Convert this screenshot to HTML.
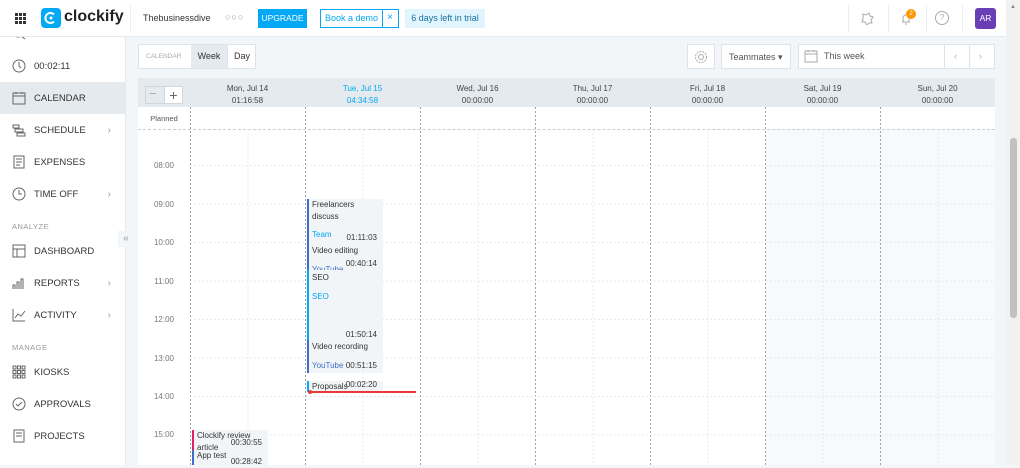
<!DOCTYPE html>
<html><head><meta charset="utf-8"><style>
*{box-sizing:border-box;margin:0;padding:0}
body{width:1020px;height:465px;overflow:hidden;font-family:"Liberation Sans",sans-serif;background:#f2f6f8;position:relative;color:#333}
.abs{position:absolute}
.top{left:0;top:0;width:1006px;height:37px;background:#fff;border-bottom:1px solid #e4eaee}
.side{left:0;top:37px;width:126px;height:428px;background:#fff;border-right:1px solid #e4eaee;overflow:hidden}
.si{position:absolute;left:0;width:125px;height:32px;font-size:9.5px;color:#333;display:flex;align-items:center;padding-left:34px}
.si svg{position:absolute;left:12px;top:9px}
.lbl{position:absolute;left:12px;font-size:7.5px;color:#999;letter-spacing:.5px}
.chev{position:absolute;right:14px;color:#999;font-size:10px}
.hd{font-size:8px;color:#444;text-align:center;line-height:12px}
.hr{position:absolute;left:138px;width:52px;text-align:center;font-size:8px;color:#777}
.ev{position:absolute;background:#f2f5f8;font-size:8px;color:#333;line-height:11.5px;padding-left:5px}
.ev .b{position:absolute;left:0;top:0;bottom:0;width:2px}
.ev .t{position:absolute;right:6px;font-size:8px}
</style></head><body>
<div class="abs top"></div>
<svg class="abs" style="left:15px;top:13px" width="11" height="11"><g fill="#333"><rect x="0" y="0" width="3" height="3"/><rect x="4" y="0" width="3" height="3"/><rect x="8" y="0" width="3" height="3"/><rect x="0" y="4" width="3" height="3"/><rect x="4" y="4" width="3" height="3"/><rect x="8" y="4" width="3" height="3"/><rect x="0" y="8" width="3" height="3"/><rect x="4" y="8" width="3" height="3"/><rect x="8" y="8" width="3" height="3"/></g></svg>
<div class="abs" style="left:41px;top:8px;width:20px;height:20px;background:#03a9f4;border-radius:4px"></div>
<svg class="abs" style="left:44px;top:11px" width="14" height="14"><path d="M10 3.5A5 5 0 1 0 10 10.5" stroke="#fff" stroke-width="2" fill="none"/><circle cx="7" cy="7" r="1.5" fill="#fff"/></svg>
<div class="abs" style="left:64px;top:8px;font-size:16px;font-weight:bold;color:#222">clockify</div>
<div class="abs" style="left:130px;top:5px;width:1px;height:28px;background:#eee"></div>
<div class="abs" style="left:143px;top:13px;font-size:9px;color:#333">Thebusinessdive</div>
<div class="abs" style="left:225px;top:12px;font-size:9px;color:#999;letter-spacing:1px">○○○</div>
<div class="abs" style="left:258px;top:9px;width:49px;height:19px;background:#03a9f4;color:#fff;font-size:8.5px;text-align:center;line-height:19px">UPGRADE</div>
<div class="abs" style="left:320px;top:9px;width:79px;height:19px;border:1px solid #03a9f4;background:#fff"></div>
<div class="abs" style="left:382px;top:9px;width:1px;height:19px;background:#03a9f4"></div>
<div class="abs" style="left:325px;top:13px;font-size:9px;color:#03a9f4">Book a demo</div>
<div class="abs" style="left:387px;top:12px;font-size:10px;color:#03a9f4">×</div>
<div class="abs" style="left:405px;top:9px;width:80px;height:19px;background:#e1f5fe;font-size:9px;color:#1a6fa0;text-align:center;line-height:19px">6 days left in trial</div>
<div class="abs" style="left:848px;top:5px;width:1px;height:27px;background:#eee"></div>
<div class="abs" style="left:888px;top:5px;width:1px;height:27px;background:#eee"></div>
<div class="abs" style="left:926px;top:5px;width:1px;height:27px;background:#eee"></div>
<div class="abs" style="left:962px;top:5px;width:1px;height:27px;background:#eee"></div>
<svg class="abs" style="left:860px;top:11px" width="14" height="14"><path d="M3 3l3 1 3-2 1 3 3 1-2 3 1 3-3 0-2 2-2-3-3 0 1-3z" stroke="#aaa" fill="none"/></svg>
<svg class="abs" style="left:899px;top:11px" width="14" height="14"><path d="M3 11h8M4 11V7a3 3 0 0 1 6 0v4M6 13h2" stroke="#aaa" fill="none"/></svg>
<div class="abs" style="left:906px;top:9px;width:10px;height:10px;border-radius:5px;background:#ff9800;color:#fff;font-size:6.5px;text-align:center;line-height:10px">2</div>
<div class="abs" style="left:935px;top:11px;width:14px;height:14px;border:1px solid #aaa;border-radius:7px;font-size:8px;color:#aaa;text-align:center;line-height:12px">?</div>
<div class="abs" style="left:975px;top:8px;width:21px;height:21px;background:#6a3fb5;border-radius:3px;color:#fff;font-size:8.5px;text-align:center;line-height:21px">AR</div>
<div class="abs" style="left:1006px;top:0;width:14px;height:465px;background:#f1f1f1"></div>
<div class="abs" style="left:1010px;top:138px;width:7px;height:180px;background:#c1c1c1;border-radius:3px"></div>
<div class="abs" style="left:1010px;top:4px;font-size:6px;color:#888">▲</div>

<div class="abs side">
<svg style="position:absolute;left:12px;top:-6px" width="14" height="10"><circle cx="6" cy="2" r="4" stroke="#666" fill="none"/><path d="M9 5l4 3" stroke="#666"/></svg>
<div class="si" style="top:13px">00:02:11<svg width="14" height="14"><circle cx="7" cy="7" r="6" stroke="#666" fill="none"/><path d="M7 3v4l2 2" stroke="#666" fill="none"/></svg></div>
<div class="si" style="top:45px;background:#e4eaee">CALENDAR<svg width="14" height="14"><rect x="1" y="2" width="12" height="11" stroke="#666" fill="none"/><path d="M1 5h12M4 1v2M10 1v2" stroke="#666"/></svg></div>
<div class="si" style="top:77px">SCHEDULE<svg width="14" height="14"><path d="M1 2h6v3H1zM3 6h8v3H3zM5 10h8v3H5z" stroke="#666" fill="none"/></svg><span class="chev">›</span></div>
<div class="si" style="top:109px">EXPENSES<svg width="14" height="14"><path d="M2 1h10v12H2zM4 4h6M4 7h6M4 10h4" stroke="#666" fill="none"/></svg></div>
<div class="si" style="top:141px">TIME OFF<svg width="14" height="14"><circle cx="7" cy="7" r="6" stroke="#666" fill="none"/><path d="M7 3v4h3" stroke="#666" fill="none"/></svg><span class="chev">›</span></div>
<div class="lbl" style="top:185px">ANALYZE</div>
<div class="si" style="top:198px">DASHBOARD<svg width="14" height="14"><rect x="1" y="1" width="12" height="12" stroke="#666" fill="none"/><path d="M1 5h12M5 5v8" stroke="#666"/></svg></div>
<div class="si" style="top:230px">REPORTS<svg width="14" height="14"><path d="M1 13V9h2v4M5 13V6h2v7M9 13V3h2v10" stroke="#666" fill="none"/></svg><span class="chev">›</span></div>
<div class="si" style="top:262px">ACTIVITY<svg width="14" height="14"><path d="M1 1v12h12M3 10l3-4 3 2 4-5" stroke="#666" fill="none"/></svg><span class="chev">›</span></div>
<div class="lbl" style="top:306px">MANAGE</div>
<div class="si" style="top:319px">KIOSKS<svg width="14" height="14"><path d="M1 1h3v3H1zM5.5 1h3v3h-3zM10 1h3v3h-3zM1 5.5h3v3H1zM5.5 5.5h3v3h-3zM10 5.5h3v3h-3zM1 10h3v3H1zM5.5 10h3v3h-3zM10 10h3v3h-3z" stroke="#666" fill="none"/></svg></div>
<div class="si" style="top:351px">APPROVALS<svg width="14" height="14"><circle cx="7" cy="7" r="6" stroke="#666" fill="none"/><path d="M4 7l2 2 4-4" stroke="#666" fill="none"/></svg></div>
<div class="si" style="top:383px">PROJECTS<svg width="14" height="14"><path d="M2 1h10v12H2zM4 4h6M4 7h6" stroke="#666" fill="none"/></svg></div>
</div>
<div class="abs" style="left:118px;top:231px;width:16px;height:16px;background:#f2f6f8;color:#999;font-size:10px;text-align:center;line-height:15px">«</div>

<div class="abs" style="left:138px;top:44px;width:118px;height:25px;background:#fff;border:1px solid #dde3e8"></div>
<div class="abs" style="left:146px;top:53px;font-size:6.5px;color:#aaa">CALENDAR</div>
<div class="abs" style="left:191px;top:45px;width:36px;height:23px;background:#e4eaee;font-size:9px;text-align:center;line-height:23px">Week</div>
<div class="abs" style="left:227px;top:45px;width:1px;height:23px;background:#dde3e8"></div>
<div class="abs" style="left:234px;top:51px;font-size:9px">Day</div>
<div class="abs" style="left:687px;top:44px;width:28px;height:25px;background:#fff;border:1px solid #dde3e8"></div>
<svg class="abs" style="left:694px;top:50px" width="14" height="14"><circle cx="7" cy="7" r="5.5" stroke="#aaa" fill="none" stroke-dasharray="2 1"/><circle cx="7" cy="7" r="2.5" stroke="#aaa" fill="none"/></svg>
<div class="abs" style="left:721px;top:44px;width:70px;height:25px;background:#fff;border:1px solid #dde3e8;font-size:9px;color:#555;padding:7px 0 0 7px">Teammates ▾</div>
<div class="abs" style="left:798px;top:44px;width:197px;height:25px;background:#fff;border:1px solid #dde3e8"></div>
<svg class="abs" style="left:804px;top:49px" width="14" height="14"><rect x="1" y="2" width="12" height="11" stroke="#aaa" fill="none"/><path d="M1 5h12M4 1v2M10 1v2" stroke="#aaa"/></svg>
<div class="abs" style="left:824px;top:51px;font-size:9px;color:#555">This week</div>
<div class="abs" style="left:944px;top:45px;width:1px;height:23px;background:#dde3e8"></div>
<div class="abs" style="left:969px;top:45px;width:1px;height:23px;background:#dde3e8"></div>
<div class="abs" style="left:954px;top:51px;font-size:9px;color:#aaa">‹</div>
<div class="abs" style="left:979px;top:51px;font-size:9px;color:#aaa">›</div>

<div class="abs" style="left:138px;top:78px;width:857px;height:29px;background:#e4eaee"></div>
<div class="abs" style="left:145px;top:86px;width:38px;height:18px;background:#e4eaee;border:1px solid #cfd6dc"></div>
<div class="abs" style="left:164px;top:86px;width:19px;height:18px;background:#fff;border:1px solid #cfd6dc;font-size:14px;color:#666;text-align:center;line-height:16px">+</div>
<div class="abs" style="left:149px;top:86px;font-size:13px;color:#aaa">−</div>
<div class="abs" style="left:138px;top:107px;width:857px;height:358px;background:#fff"></div>
<div class="abs" style="left:765px;top:129px;width:230px;height:336px;background:#f7f9fb"></div>
<div class="abs" style="left:138px;top:129px;width:857px;border-top:1px dashed #c6ced6"></div>
<div class="abs" style="left:138px;top:114px;width:52px;text-align:center;font-size:7.5px;color:#555">Planned</div>
<div class="abs hd" style="left:190px;top:83px;width:115px">Mon, Jul 14<br>01:16:58</div>
<div class="abs hd" style="left:305px;top:83px;width:115px;color:#03a9f4">Tue, Jul 15<br>04:34:58</div>
<div class="abs hd" style="left:420px;top:83px;width:115px">Wed, Jul 16<br>00:00:00</div>
<div class="abs hd" style="left:535px;top:83px;width:115px">Thu, Jul 17<br>00:00:00</div>
<div class="abs hd" style="left:650px;top:83px;width:115px">Fri, Jul 18<br>00:00:00</div>
<div class="abs hd" style="left:765px;top:83px;width:115px">Sat, Jul 19<br>00:00:00</div>
<div class="abs hd" style="left:880px;top:83px;width:115px">Sun, Jul 20<br>00:00:00</div>
<svg class="abs" style="left:138px;top:107px" width="857" height="358">
<g stroke="#9aa4ad" stroke-dasharray="2 2"><line x1="52.5" y1="0" x2="52.5" y2="358"/><line x1="167.5" y1="0" x2="167.5" y2="358"/><line x1="282.5" y1="0" x2="282.5" y2="358"/><line x1="397.5" y1="0" x2="397.5" y2="358"/><line x1="512.5" y1="0" x2="512.5" y2="358"/><line x1="627.5" y1="0" x2="627.5" y2="358"/><line x1="742.5" y1="0" x2="742.5" y2="358"/></g>
<g stroke="#e6eaee" stroke-dasharray="2 2"><line x1="110" y1="22" x2="110" y2="358"/><line x1="225" y1="22" x2="225" y2="358"/><line x1="340" y1="22" x2="340" y2="358"/><line x1="455" y1="22" x2="455" y2="358"/><line x1="570" y1="22" x2="570" y2="358"/><line x1="685" y1="22" x2="685" y2="358"/><line x1="800" y1="22" x2="800" y2="358"/>
<line x1="52" y1="58.5" x2="857" y2="58.5"/><line x1="52" y1="97" x2="857" y2="97"/><line x1="52" y1="135.5" x2="857" y2="135.5"/><line x1="52" y1="174" x2="857" y2="174"/><line x1="52" y1="212.5" x2="857" y2="212.5"/><line x1="52" y1="251" x2="857" y2="251"/><line x1="52" y1="289.5" x2="857" y2="289.5"/><line x1="52" y1="328" x2="857" y2="328"/></g>
</svg>
<div class="hr" style="top:161px">08:00</div>
<div class="hr" style="top:200px">09:00</div>
<div class="hr" style="top:238px">10:00</div>
<div class="hr" style="top:277px">11:00</div>
<div class="hr" style="top:315px">12:00</div>
<div class="hr" style="top:354px">13:00</div>
<div class="hr" style="top:392px">14:00</div>
<div class="hr" style="top:430px">15:00</div>

<div class="ev" style="left:307px;top:199px;width:76px;height:42px"><div class="b" style="background:#3f6dc9"></div>Freelancers<br>discuss<div style="position:absolute;top:30px;left:5px;color:#03a9f4">Team</div><span class="t" style="top:33px">01:11:03</span></div>
<div class="ev" style="left:307px;top:241px;width:76px;height:29px;overflow:hidden"><div class="b" style="background:#3f6dc9"></div><div style="padding-top:4px">Video editing</div><span class="t" style="top:17px">00:40:14</span><div style="position:absolute;top:23px;left:5px;color:#3f6dc9">YouTube</div></div>
<div class="ev" style="left:307px;top:270px;width:76px;height:70px"><div class="b" style="background:#03a9f4"></div><div style="padding-top:2px">SEO</div><div style="margin-top:7px;color:#03a9f4">SEO</div><span class="t" style="top:59px">01:50:14</span></div>
<div class="ev" style="left:307px;top:340px;width:76px;height:33px"><div class="b" style="background:#3f6dc9"></div><div style="padding-top:1px">Video recording</div><div style="margin-top:7px;color:#3f6dc9">YouTube</div><span class="t" style="top:20px">00:51:15</span></div>
<div class="ev" style="left:307px;top:381px;width:76px;height:11px"><div class="b" style="background:#03a9f4"></div>Proposals<span class="t" style="top:-2px">00:02:20</span></div>
<div class="abs" style="left:309px;top:391px;width:107px;height:2px;background:#e53935"></div>
<div class="abs" style="left:308px;top:390px;width:4px;height:4px;border-radius:2px;background:#e53935"></div>
<div class="ev" style="left:192px;top:430px;width:76px;height:20px;overflow:hidden"><div class="b" style="background:#e0245e"></div>Clockify review<br>article<span class="t" style="top:7px">00:30:55</span></div>
<div class="ev" style="left:192px;top:450px;width:76px;height:15px"><div class="b" style="background:#3f6dc9"></div>App test<span class="t" style="top:6px">00:28:42</span></div>
</body></html>
